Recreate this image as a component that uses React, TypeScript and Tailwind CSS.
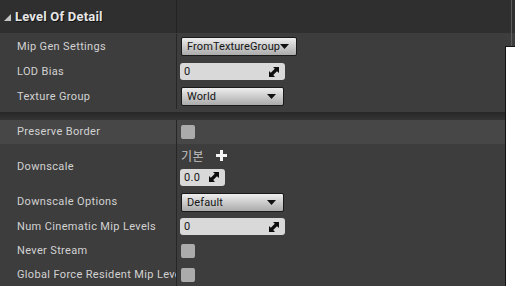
import React from 'react';

function Arrow() {
  return (
    <svg width="9" height="5" viewBox="0 0 9 5" className="shrink-0">
      <path d="M0 0 L9 0 L4.5 5 Z" fill="#111" />
    </svg>
  );
}

function SpinIcon() {
  return (
    <svg width="10" height="10" viewBox="0 0 10 10" className="shrink-0">
      <path d="M10 0 L10 6 L8 4.2 L4.2 8 L6 10 L0 10 L0 4 L1.8 5.8 L5.8 1.8 L4 0 Z" fill="#0d0d0d" />
    </svg>
  );
}

function Dropdown({ value, width }: { value: string; width: string }) {
  return (
    <div
      className={`${width} ml-px h-[19px] flex items-center justify-between pl-[5px] pr-[7px] rounded-[2px] border border-[#1a1a1a] bg-gradient-to-b from-[#eeeeee] to-[#ababab] text-[#151515] tracking-[0.1px]`}
    >
      <span className="leading-none">{value}</span>
      <Arrow />
    </div>
  );
}

function NumberField({ value, width }: { value: string; width: string }) {
  return (
    <div className={`${width} h-[17px] flex items-center justify-between pl-[4px] pr-[6px] rounded-[3px] bg-[#d9d9d9] text-[#151515]`}>
      <span className="leading-none">{value}</span>
      <SpinIcon />
    </div>
  );
}

function Checkbox() {
  return <div className="ml-px w-[14px] h-[14px] rounded-[2px] bg-[#ababab]" />;
}

function Row({ label, height, bg, children }: { label: string; height: string; bg?: string; children?: React.ReactNode }) {
  return (
    <div className={`flex ${height} ${bg ?? ''}`}>
      <div className="w-[177px] shrink-0 flex items-center pl-[17px] pt-px border-r border-[#262626] overflow-hidden whitespace-nowrap text-[#d2d2d2]">
        {label}
      </div>
      <div className="flex-1 flex items-center pl-[3px]">{children}</div>
    </div>
  );
}

export default function App() {
  return (
    <div className="relative w-[515px] h-[286px] overflow-hidden bg-[#3d3d3d] font-['Roboto',_'Noto_Sans_CJK_KR',_sans-serif] text-[11px] tracking-[0.35px]">
      <div className="flex h-[33px] bg-[#2f2f2f]">
        <div className="w-[177px] shrink-0 flex items-center pl-[4px] border-r border-[#232323]">
          <svg width="7" height="7" viewBox="0 0 7 7" className="mr-[4px] mt-[2px]">
            <path d="M7 0 L7 7 L0 7 Z" fill="#c4c4c4" />
          </svg>
          <span className="text-[13px] font-bold tracking-[0.2px] text-[#e6e6e6] [text-shadow:1px_1px_0_#111]">Level Of Detail</span>
        </div>
      </div>

      <div className="bg-[#3d3d3d] pt-px pb-[3px]">
        <Row label="Mip Gen Settings" height="h-[25px]">
          <Dropdown value="FromTextureGroup" width="w-[116px]" />
        </Row>
        <Row label="LOD Bias" height="h-[25px]">
          <NumberField value="0" width="w-[105px]" />
        </Row>
        <Row label="Texture Group" height="h-[25px]">
          <Dropdown value="World" width="w-[103px]" />
        </Row>
      </div>

      <div className="h-[8px] bg-gradient-to-b from-[#272727] to-[#343434]" />

      <Row label="Preserve Border" height="h-[24px]" bg="bg-[#474747]">
        <Checkbox />
      </Row>
      <Row label="Downscale" height="h-[46px]">
        <div className="flex flex-col">
          <div className="flex items-center h-[14px] ml-px">
            <span className="text-[#c4c4c4] font-['Noto_Sans_CJK_KR',_sans-serif] text-[12px] leading-none">기본</span>
            <svg width="11" height="11" viewBox="0 0 11 11" className="ml-[12px]">
              <path d="M4 0 H7 V4 H11 V7 H7 V11 H4 V7 H0 V4 H4 Z" fill="#f4f4f4" />
            </svg>
          </div>
          <div className="mt-[6px]">
            <NumberField value="0.0" width="w-[45px]" />
          </div>
        </div>
      </Row>
      <Row label="Downscale Options" height="h-[24px]">
        <Dropdown value="Default" width="w-[103px]" />
      </Row>
      <Row label="Num Cinematic Mip Levels" height="h-[25px]">
        <NumberField value="0" width="w-[105px]" />
      </Row>
      <Row label="Never Stream" height="h-[24px]">
        <Checkbox />
      </Row>
      <Row label="Global Force Resident Mip Levels" height="h-[24px]">
        <Checkbox />
      </Row>

      <div className="absolute left-[511px] top-0 w-px h-[46px] bg-[#5c5c5c]" />
      <div className="absolute left-[505px] top-[46px] right-0 bottom-0 bg-white border-l border-t border-[#141414]" />
    </div>
  );
}
